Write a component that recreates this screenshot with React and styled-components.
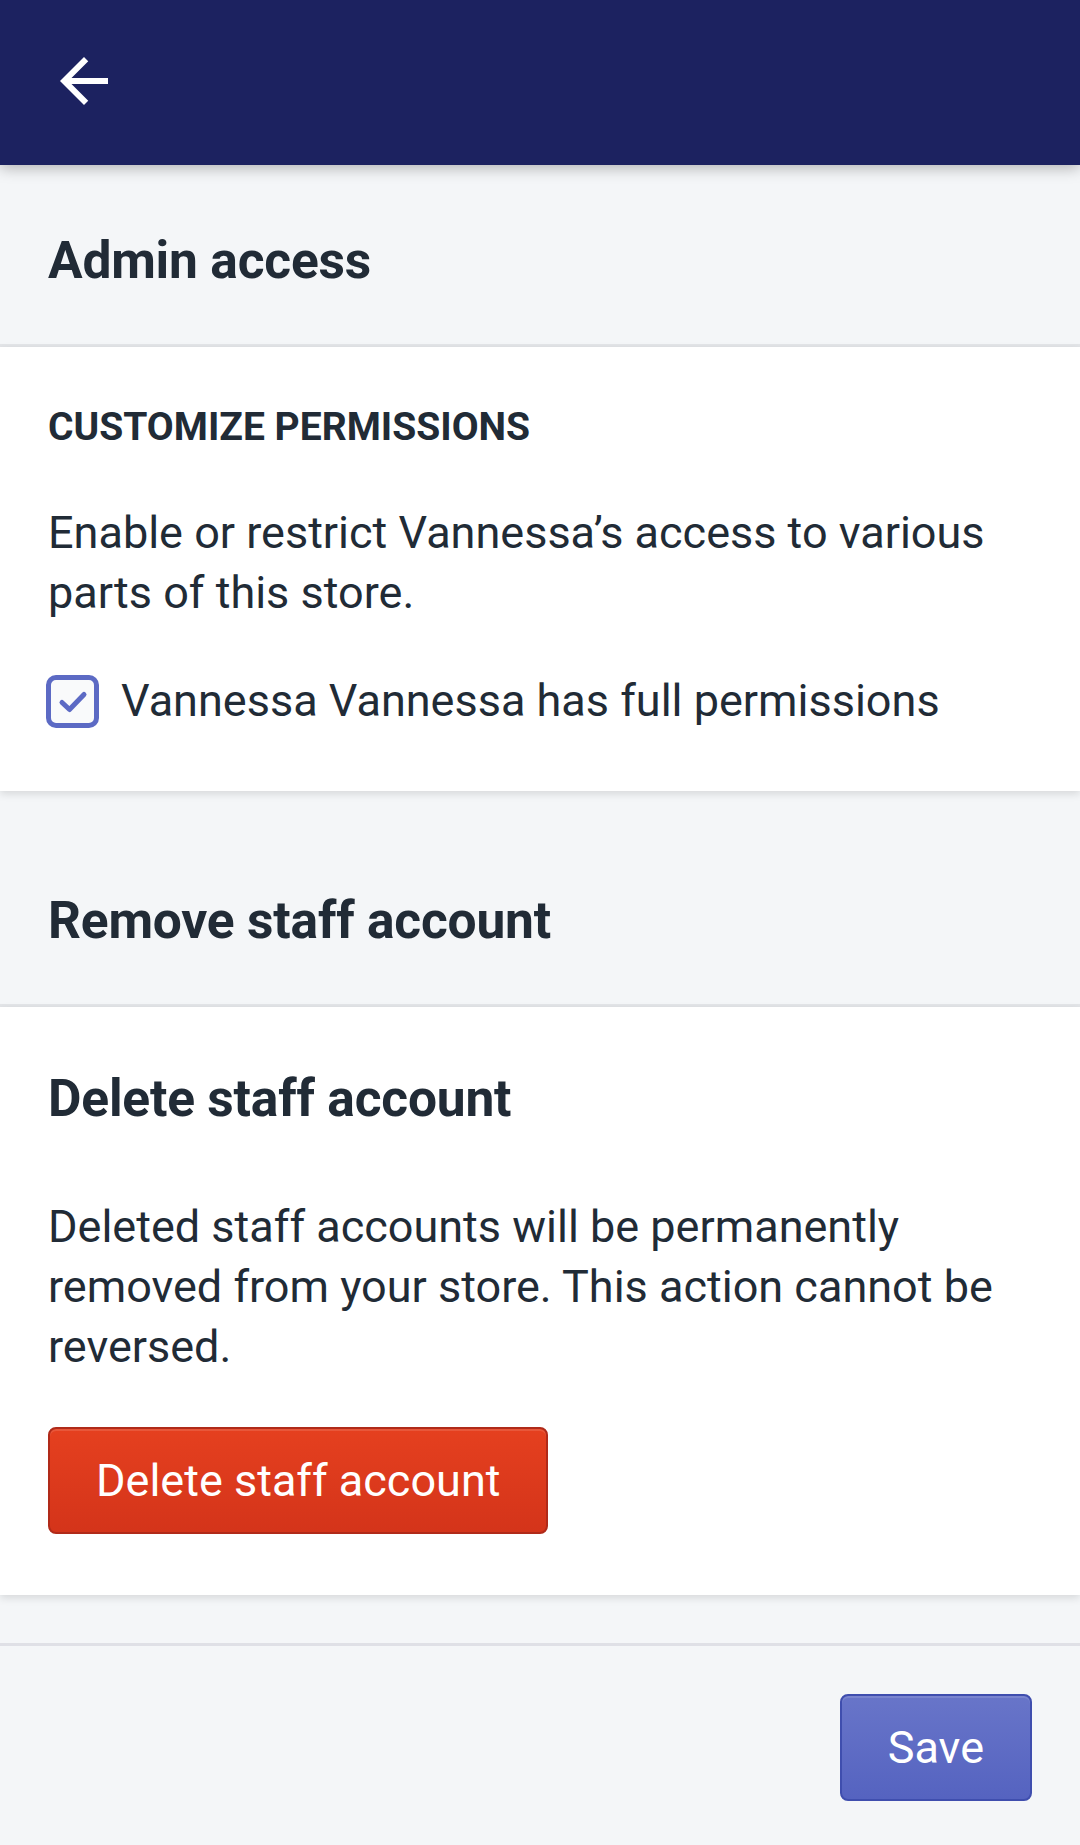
import React from "react";
import styled, { createGlobalStyle } from "styled-components";

const Global = createGlobalStyle`
  html, body { margin: 0; padding: 0; }
  body {
    background: #f4f6f8;
    font-family: Roboto, "Liberation Sans", Arial, sans-serif;
    color: #212b36;
    -webkit-font-smoothing: antialiased;
  }
  * { box-sizing: border-box; }
`;

const Page = styled.div`
  width: 1080px;
  min-height: 1845px;
  display: flex;
  flex-direction: column;
  background: #f4f6f8;
`;

const TopBar = styled.header`
  height: 165px;
  background: #1c2260;
  padding: 45px 48px;
  display: flex;
  align-items: flex-start;
  position: relative;
  z-index: 3;
  box-shadow: 0 3px 14px rgba(0, 0, 0, 0.28);
`;

const BackButton = styled.button`
  border: 0;
  background: none;
  padding: 0;
  width: 72px;
  height: 72px;
  display: flex;
  cursor: pointer;
`;

const SectionTitle = styled.div`
  padding: ${(p) => p.$top}px 48px 51px;
  border-bottom: 3px solid #e3e5e8;
`;

const Heading = styled.h2`
  margin: 0;
  font-size: 51.5px;
  line-height: 64px;
  font-weight: 700;
  letter-spacing: -0.2px;
  color: #212b36;
`;

const Card = styled.section`
  background: #ffffff;
  padding: ${(p) => p.$top}px 48px ${(p) => p.$bottom}px;
  display: flex;
  flex-direction: column;
  align-items: flex-start;
  position: relative;
  z-index: 1;
  box-shadow: 0 3px 8px rgba(0, 0, 0, 0.12);
`;

const Subheading = styled.h3`
  margin: 0 0 52px;
  font-size: 39px;
  line-height: 48px;
  font-weight: 700;
  text-transform: uppercase;
  color: #212b36;
`;

const Paragraph = styled.p`
  margin: ${(p) => p.$top || 0}px 0 0;
  font-size: 45px;
  line-height: 60px;
  font-weight: 400;
  color: #212b36;
`;

const CheckRow = styled.label`
  margin-top: 48px;
  display: flex;
  align-items: center;
  gap: 22px;
  height: 60px;
  font-size: 45px;
  line-height: 60px;
  color: #212b36;
  margin-left: -2px;
`;

const CheckBox = styled.span`
  width: 53px;
  height: 53px;
  border: 5px solid #5c6ac4;
  border-radius: 10px;
  background: #f9fafb;
  display: flex;
  align-items: center;
  justify-content: center;
  flex-shrink: 0;
`;

const Button = styled.button`
  height: 107px;
  padding: 0 ${(p) => p.$pad}px;
  border-radius: 8px;
  border: 2px solid ${(p) => (p.$tone === "danger" ? "#b02a19" : "#3f4eae")};
  background: ${(p) =>
    p.$tone === "danger"
      ? "linear-gradient(#e5401f, #d4341a)"
      : "linear-gradient(#6875c9, #5563c0)"};
  box-shadow: inset 0 2px 0 rgba(255, 255, 255, 0.12);
  color: #ffffff;
  font-family: Roboto, "Liberation Sans", Arial, sans-serif;
  font-size: 45px;
  font-weight: 400;
  cursor: pointer;
`;

const DangerButton = styled(Button)`
  margin-top: 50px;
`;

const Gap = styled.div`
  height: 51px;
  border-bottom: 3px solid #dfe0e6;
`;

const Footer = styled.footer`
  flex: 1;
  display: flex;
  justify-content: flex-end;
  align-items: flex-start;
  padding: 48px 48px;
`;

const ArrowIcon = () => (
  <svg width="72" height="72" viewBox="0 0 24 24" fill="#ffffff">
    <path d="M20 11H7.83l5.59-5.59L12 4l-8 8 8 8 1.41-1.41L7.83 13H20v-2z" />
  </svg>
);

const CheckIcon = () => (
  <svg width="34" height="34" viewBox="0 0 34 34" fill="none">
    <path
      d="M6 18.5 L13.5 25.5 L28 10.5"
      stroke="#5c6ac4"
      strokeWidth="5"
      strokeLinecap="round"
      strokeLinejoin="round"
    />
  </svg>
);

export default function App() {
  return (
    <>
      <Global />
      <Page>
        <TopBar>
          <BackButton aria-label="Back">
            <ArrowIcon />
          </BackButton>
        </TopBar>

        <SectionTitle $top={64}>
          <Heading>Admin access</Heading>
        </SectionTitle>

        <Card $top={56} $bottom={60}>
          <Subheading>Customize permissions</Subheading>
          <Paragraph>
            Enable or restrict Vannessa’s access to various parts of this store.
          </Paragraph>
          <CheckRow>
            <CheckBox>
              <CheckIcon />
            </CheckBox>
            Vannessa Vannessa has full permissions
          </CheckRow>
        </Card>

        <SectionTitle $top={98}>
          <Heading>Remove staff account</Heading>
        </SectionTitle>

        <Card $top={60} $bottom={61}>
          <Heading>Delete staff account</Heading>
          <Paragraph $top={66}>
            Deleted staff accounts will be permanently removed from your store.
            This action cannot be reversed.
          </Paragraph>
          <DangerButton $tone="danger" $pad={46}>
            Delete staff account
          </DangerButton>
        </Card>

        <Gap />

        <Footer>
          <Button $tone="primary" $pad={46}>
            Save
          </Button>
        </Footer>
      </Page>
    </>
  );
}
